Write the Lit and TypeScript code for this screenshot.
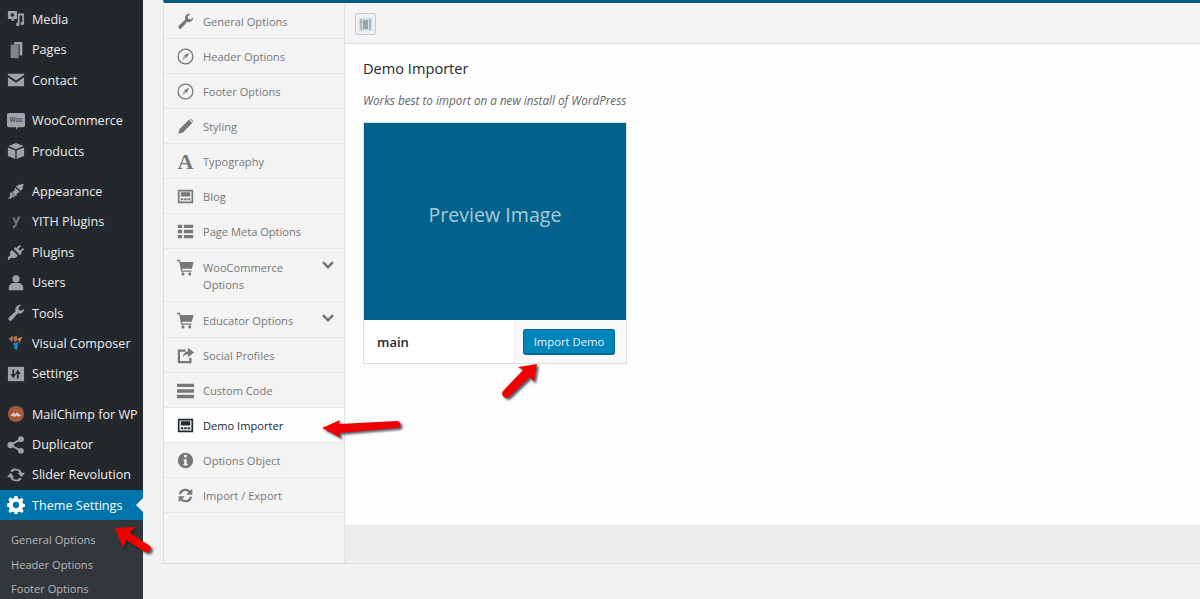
import { LitElement, html, css, svg } from "lit";
import { customElement } from "lit/decorators.js";

const ICONS: Record<string, any> = {
  media: svg`<path d="M1 1h10v9H8v2H5v-2H1z M4 1.5h4v2H4z" /><circle cx="6" cy="5.500" r="2" fill="#23282d"/><path d="M12 4h7v11a2 2 0 1 1-2-2V6h-3v10a2 2 0 1 1-2-2z"/>`,
  pages: svg`<path d="M8 1h9v15h-3V4H8z"/><path d="M4 4h9v15H4z" opacity=".75"/>`,
  contact: svg`<path d="M1 3h18v1.500l-9 6-9-6z"/><path d="M1 7l9 6 9-6v10H1z"/>`,
  woo: svg`<path d="M2 1h16a2 2 0 0 1 2 2v12a2 2 0 0 1-2 2h-6l-2 3v-3H2a2 2 0 0 1-2-2V3a2 2 0 0 1 2-2z"/><text x="10" y="11.500" text-anchor="middle" font-size="7" font-family="Liberation Sans, sans-serif" fill="#23282d">Woo</text>`,
  box: svg`<path d="M10 1l8.500 3.500L10 8 1.500 4.500z"/><path d="M1 6l8.300 3.400V19L1 15.500zM19 6l-8.300 3.400V19l8.300-3.500z"/>`,
  brush: svg`<path d="M9 6l5 5-3 2-1 3-5-5 3-1zM10 5l3-2 6-1-2 4 1 1-3 3z"/><path d="M4 11l5 5-2 1-1-1-1 2-4 1 3-4-1-1z"/>`,
  yith: svg`<path opacity=".6" d="M6 5h3l1 4 2-5h3l-4 9c-1 3-3 4-5 4l1-3c1 0 2-1 2-2z"/>`,
  plug: svg`<path d="M15 1l1.500 1.500-3 3 2 2 3-3L20 6l-3.500 3.500 1 1-2 2-7-7 2-2 1 1z" transform="translate(-1 1)"/><path d="M6 8l6 6-2 2c-2 1-4 1-5 0l-3 3H1v-3l3-3c-1-1-1-3 0-4z"/>`,
  user: svg`<circle cx="10" cy="5.500" r="4"/><path d="M2 18v-3c0-3 3-5 4.500-5h7c1.500 0 4.500 2 4.500 5v3z"/>`,
  wrench: svg`<path d="M19 5.400a5.200 5.200 0 0 1-7 5L5.400 18a2.100 2.100 0 0 1-3.200-.1 2.100 2.100 0 0 1-.1-3L9.500 8a5.200 5.200 0 0 1 6.300-6.800l-3.200 3 .6 2.600 2.700.7z"/>`,
  vc: svg`<path d="M2 5l4-3 1 4-2 3zM7 3l4-1 1 5-4 2z" fill="#b0704a"/><path d="M12 5l5-2-3 7z" fill="#d08a55"/><path d="M7 10l6-1-2 9-3-2z" fill="#1f7fb8"/>`,
  settings: svg`<path d="M1 2h18v16H1z"/><path d="M6 5h2v5h2l-3 5-3-5h2zM13 15h-2v-5H9l3-5 3 5h-2z" fill="#23282d"/>`,
  chimp: svg`<circle cx="10" cy="10" r="9" fill="#a5583a"/><path d="M4 12l3-4 2 2 2-2 5 4-3 1-2-1-2 1z" fill="#d8c8b8"/>`,
  share: svg`<circle cx="15.500" cy="3.500" r="3.200"/><circle cx="4" cy="10" r="3.500"/><circle cx="15.500" cy="16.500" r="3.200"/><path d="M4 10l11.500-6.500M4 10l11.500 6.500" stroke-width="2" stroke="currentColor"/>`,
  slider: svg`<path d="M10 3a7 7 0 0 1 6.500 4.500H20l-4 5-4-5h2a4.500 4.500 0 0 0-8-.5L3.500 5.500A7 7 0 0 1 10 3z"/><path d="M10 17a7 7 0 0 1-6.500-4.500H0l4-5 4 5H6a4.500 4.500 0 0 0 8 .5l2.500 1.500A7 7 0 0 1 10 17z"/>`,
  gear: svg`<path fill-rule="evenodd" d="M8.400 0h3.200l.5 2.700 1.800.8 2.300-1.600 2.300 2.300-1.600 2.300.8 1.800 2.500.5v3.200l-2.500.5-.8 1.800 1.600 2.300-2.300 2.300-2.300-1.600-1.800.8-.5 2.500H8.400l-.5-2.500-1.800-.8-2.300 1.600-2.300-2.300 1.600-2.300-.8-1.800L0 11.600V8.400l2.300-.5.8-1.800-1.600-2.300 2.300-2.300 2.300 1.600 1.800-.8zM10 6.500a3.500 3.500 0 1 0 0 7 3.500 3.500 0 0 0 0-7z"/>`,
  compass: svg`<circle cx="10" cy="10" r="8.700" fill="none" stroke="currentColor" stroke-width="1.500"/><path d="M14.500 5.500L11.500 11.500 8.500 8.500z"/><path d="M5.500 14.500L8.500 8.500l3 3z" opacity=".55"/>`,
  pencil: svg`<path d="M14 2l4 4L7 17l-5.500 1.500L3 13z"/><path d="M15 1l1-.5 3.500 3.500-.5 1z"/>`,
  blog: svg`<path fill-rule="evenodd" d="M1 2h18v16H1zM3 4v12h14V4z"/><path d="M4.500 5h11v5h-11zM4.500 12h3v2.500h-3zM8.500 12h3v2.500h-3zM12.500 12h3v2.500h-3z"/>`,
  list: svg`<path d="M1 2h5v4H1zM8 2h11v4H8zM1 8h5v4H1zM8 8h11v4H8zM1 14h5v4H1zM8 14h11v4H8z"/>`,
  cart: svg`<path d="M0 1h3.500l.6 2.500H19.500l-2 8H6l.4 2h10.600v1.500H5L2.500 2.500H0z"/><circle cx="7" cy="17.500" r="1.800"/><circle cx="15" cy="17.500" r="1.800"/>`,
  social: svg`<path d="M1 3h9v2.500H3.500v11h11V13H17v6H1z"/><path d="M13 1l7 5.500-7 5.500V8.500c-3 0-5 1-6 4 0-4.500 2.500-7 6-7.500z"/>`,
  bars: svg`<path d="M0 2h20v4H0zM0 8.500h20v4H0zM0 15h20v4H0z"/>`,
  info: svg`<path fill-rule="evenodd" d="M10 1a9 9 0 1 1 0 18 9 9 0 0 1 0-18zM8.500 3.500v3h3v-3zM7.500 8.500V10h1v4h-1v2h5v-2h-1V8.500z"/>`,
  refresh: svg`<path d="M10 2a8 8 0 0 1 5.600 2.300L18 2v7h-7l2.700-2.700A5.300 5.300 0 0 0 4.800 8.500H2.100A8 8 0 0 1 10 2z"/><path d="M10 18a8 8 0 0 1-5.600-2.300L2 18v-7h7l-2.700 2.700a5.300 5.300 0 0 0 8.900-2.200h2.700A8 8 0 0 1 10 18z"/>`,
};

// the Typography icon is a plain serif glyph, everything else is drawn
const icon = (name: string) =>
  name === "font"
    ? html`<span class="icon glyph">A</span>`
    : html`<svg class="icon" viewBox="0 0 20 20" fill="currentColor">${ICONS[name]}</svg>`;

const MENU = [
  [["Media", "media"], ["Pages", "pages"], ["Contact", "contact"]],
  [["WooCommerce", "woo"], ["Products", "box"]],
  [
    ["Appearance", "brush"],
    ["YITH Plugins", "yith"],
    ["Plugins", "plug"],
    ["Users", "user"],
    ["Tools", "wrench"],
    ["Visual Composer", "vc"],
    ["Settings", "settings"],
  ],
];

const MENU_AFTER = [
  ["MailChimp for WP", "chimp"],
  ["Duplicator", "share"],
  ["Slider Revolution", "slider"],
];

const OPTIONS = [
  { label: "General Options", icon: "wrench" },
  { label: "Header Options", icon: "compass" },
  { label: "Footer Options", icon: "compass" },
  { label: "Styling", icon: "pencil" },
  { label: "Typography", icon: "font" },
  { label: "Blog", icon: "blog" },
  { label: "Page Meta Options", icon: "list" },
  { label: "WooCommerce Options", icon: "cart", more: true, tall: true },
  { label: "Educator Options", icon: "cart", more: true },
  { label: "Social Profiles", icon: "social" },
  { label: "Custom Code", icon: "bars" },
  { label: "Demo Importer", icon: "blog", active: true },
  { label: "Options Object", icon: "info" },
  { label: "Import / Export", icon: "refresh" },
];

@customElement("app-root")
export class AppRoot extends LitElement {
  static styles = css`
    :host {
      display: block;
      position: relative;
      height: 599px;
      overflow: hidden;
      background: #f1f1f1;
      font-family: "Open Sans", sans-serif;
      font-size: 11.1px;
    }
    .page {
      display: grid;
      grid-template-columns: 143px 1fr;
      height: 599px;
    }
    .adminmenu {
      background: #23282d;
      padding-top: 3.8px;
      overflow: hidden;
    }
    .group {
      margin-bottom: 10px;
    }
    .item {
      display: flex;
      align-items: center;
      height: 30.4px;
      box-sizing: border-box;
      padding: 1px 0 0 7px;
      gap: 7px;
      color: #eee;
      font-size: 12.6px;
      white-space: nowrap;
    }
    .item .icon {
      width: 18px;
      height: 18px;
      color: #9ea3a8;
      flex: none;
    }
    .item.current {
      position: relative;
      background: #0073aa;
      color: #fff;
    }
    .item.current .icon {
      color: #fff;
    }
    .item.current::after {
      content: "";
      position: absolute;
      right: 0;
      top: 8px;
      border: 7px solid transparent;
      border-right-color: #f1f1f1;
      border-left-width: 0;
    }
    .submenu {
      background: #32373c;
      padding-top: 8px;
      height: 90px;
    }
    .submenu div {
      height: 24.6px;
      line-height: 24.6px;
      padding-left: 11px;
      color: #b4b9be;
    }
    .wrap {
      padding-left: 20px;
    }
    .panel {
      display: flex;
      flex-direction: column;
      height: 564px;
      border-top: 3px solid #005a7d;
      border-left: 1px solid #ddd;
      border-bottom: 1px solid #ddd;
      box-sizing: border-box;
      background: #fdfdfd;
    }
    .panel-body {
      flex: 1;
      display: grid;
      grid-template-columns: 181px 1fr;
    }
    .options {
      background: #f3f3f3;
      border-right: 1px solid #e0e0e0;
      padding-top: 0.5px;
    }
    .option {
      display: flex;
      align-items: center;
      height: 35.15px;
      box-sizing: border-box;
      padding: 1px 10px 0 13px;
      gap: 9px;
      border-bottom: 1px solid #e6e6e6;
      color: #777;
      line-height: 17px;
    }
    .option .icon {
      width: 17px;
      height: 17px;
      flex: none;
    }
    .glyph {
      display: block;
      font-family: "Liberation Serif", serif;
      font-size: 22px;
      font-weight: 700;
      line-height: 17px;
      text-align: center;
    }
    .option.tall {
      height: 53px;
      align-items: flex-start;
      padding-top: 9.5px;
    }
    .option .label {
      flex: 1;
    }
    .option.active {
      background: #fdfdfd;
      color: #23282d;
    }
    .chevron {
      width: 12px;
      height: 8px;
      flex: none;
      fill: none;
      stroke: #777;
      stroke-width: 2.6;
      position: relative;
      top: -2px;
    }
    .option.tall .chevron {
      margin-top: 4px;
    }
    .main {
      display: flex;
      flex-direction: column;
    }
    .toolbar {
      height: 41px;
      box-sizing: border-box;
      padding: 10px 0 0 10px;
      background: #f3f3f3;
      border-bottom: 1px solid #e0e0e0;
    }
    .toolbtn {
      display: flex;
      align-items: center;
      justify-content: center;
      width: 21px;
      height: 22px;
      box-sizing: border-box;
      border: 1px solid #bccbd8;
      border-radius: 2px;
      background: #eef1f4;
    }
    .toolbtn svg {
      width: 15px;
      height: 15px;
    }
    .content {
      flex: 1;
      padding: 14px 18px;
    }
    h2 {
      margin: 0;
      font-size: 14.6px;
      font-weight: 400;
      line-height: 20px;
      color: #23282d;
    }
    .hint {
      margin: 14px 0 13px;
      font-size: 11.7px;
      font-style: italic;
      line-height: 17px;
      color: #666;
    }
    .card {
      width: 264px;
      box-sizing: border-box;
      border: 1px solid #ddd;
      background: #fff;
    }
    .preview {
      height: 197px;
      box-sizing: border-box;
      padding-bottom: 14px;
      display: flex;
      align-items: center;
      justify-content: center;
      background: #03628c;
      color: #a9c8d7;
      font-size: 19.6px;
    }
    .card-foot {
      display: flex;
      align-items: stretch;
      height: 43px;
    }
    .name {
      flex: 1;
      padding-left: 13px;
      line-height: 45px;
      font-size: 13px;
      font-weight: 600;
      color: #23282d;
    }
    .actions {
      width: 112px;
      box-sizing: border-box;
      padding-left: 8px;
      display: flex;
      align-items: center;
      background: #f8f8f8;
      border-left: 1px solid #eee;
    }
    .btn {
      width: 92px;
      height: 26px;
      box-sizing: border-box;
      border: 1px solid #006799;
      border-bottom-width: 2px;
      border-radius: 3px;
      background: #0085ba;
      color: #e8f3f8;
      font-size: 11.3px;
      line-height: 23px;
      text-align: center;
    }
    .footer {
      height: 38px;
      background: #ededed;
      border-top: 1px solid #e4e4e4;
      box-sizing: border-box;
    }
    .arrows {
      position: absolute;
      inset: 0;
      width: 1200px;
      height: 599px;
      pointer-events: none;
      filter: drop-shadow(2px 2px 1px rgba(20, 30, 40, 0.7));
    }
  `;

  renderItem([label, name]: string[]) {
    return html`<div class="item">${icon(name)}<span>${label}</span></div>`;
  }

  renderOption(o: any) {
    const cls = ["option", o.tall ? "tall" : "", o.active ? "active" : ""].join(" ");
    return html`<div class=${cls}>
      ${icon(o.icon)}
      <span class="label">${o.label}</span>
      ${o.more
        ? html`<svg class="chevron" viewBox="0 0 12 8"><path d="M1 1.200l5 5 5-5" /></svg>`
        : ""}
    </div>`;
  }

  render() {
    return html`
      <div class="page">
        <nav class="adminmenu">
          ${MENU.map(g => html`<div class="group">${g.map(i => this.renderItem(i))}</div>`)}
          ${MENU_AFTER.map(i => this.renderItem(i))}
          <div class="item current">${icon("gear")}<span>Theme Settings</span></div>
          <div class="submenu">
            <div>General Options</div>
            <div>Header Options</div>
            <div>Footer Options</div>
          </div>
        </nav>
        <div class="wrap">
          <div class="panel">
            <div class="panel-body">
              <div class="options">${OPTIONS.map(o => this.renderOption(o))}</div>
              <div class="main">
                <div class="toolbar">
                  <div class="toolbtn">
                    <svg viewBox="0 0 15 15">
                      <path d="M1 1h13v13H1z" fill="#d3dbe1" />
                      <path d="M2 2h2v11H2zM11 2h2v11h-2z" fill="#aab8c3" />
                      <path d="M5 3h5v9H5z" fill="#93a4b0" />
                    </svg>
                  </div>
                </div>
                <div class="content">
                  <h2>Demo Importer</h2>
                  <p class="hint">Works best to import on a new install of WordPress</p>
                  <div class="card">
                    <div class="preview">Preview Image</div>
                    <div class="card-foot">
                      <div class="name">main</div>
                      <div class="actions"><div class="btn">Import Demo</div></div>
                    </div>
                  </div>
                </div>
                <div class="footer"></div>
              </div>
            </div>
          </div>
        </div>
      </div>
      <svg class="arrows" viewBox="0 0 1200 599" fill="#f00000">
        <path d="M115 528l20-1-5 6 20 13c3 3-1 8-5 6l-19-12-3 8z" />
        <path d="M322 428l18-8-1 4 58-3c5 1 5 7 0 7l-58 5 2 5z" />
        <path d="M537 364l-3 18-4-5-21 20c-4 3-9-2-6-6l20-21-5-3z" />
      </svg>
    `;
  }
}
